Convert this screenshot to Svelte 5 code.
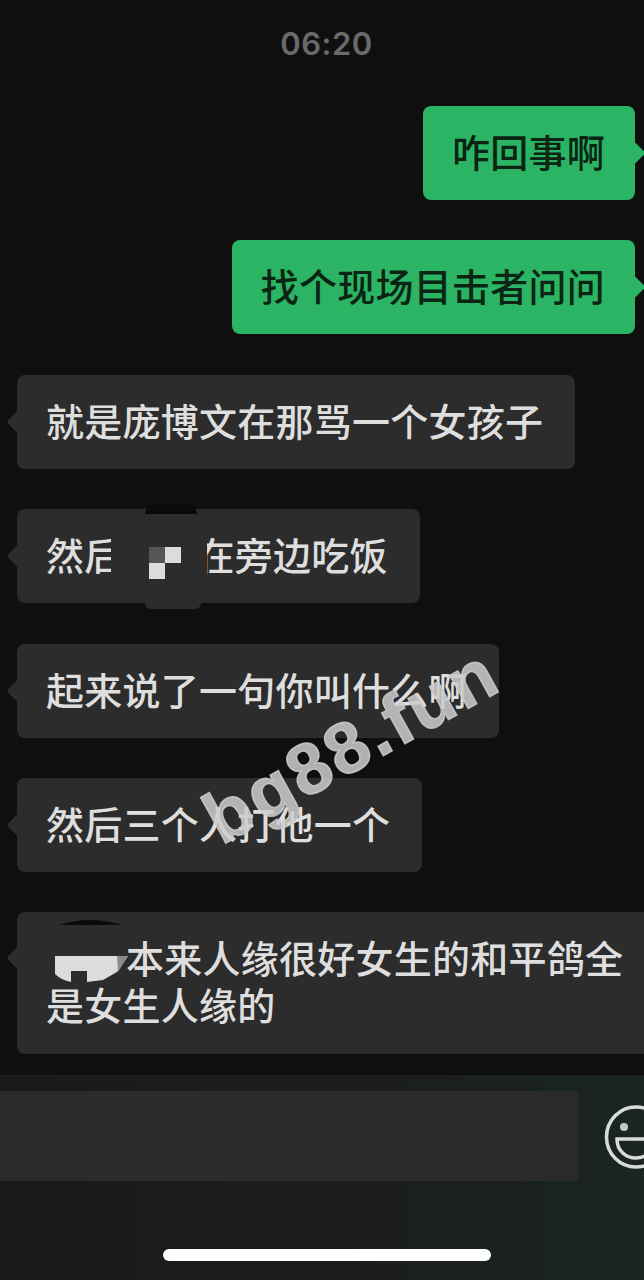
<script>
  const outgoing = ["咋回事啊", "找个现场目击者问问"];
</script>

<main>
  <div class="time">06:20</div>

  <section class="messages">
    {#each outgoing as text}
      <div class="bubble me">{text}</div>
    {/each}

    <div class="bubble">就是庞博文在那骂一个女孩子</div>

    <div class="bubble">
      然后<span class="gap two"></span>在旁边吃饭
      <span class="patch">
        <span class="bump-top"></span>
        <span class="bump-bottom"></span>
        <span class="mosaic"><i class="grey"></i><i></i><i></i><i class="none"></i></span>
      </span>
    </div>

    <div class="bubble">起来说了一句你叫什么啊</div>
    <div class="bubble">然后三个人打他一个</div>

    <div class="bubble wide">
      <span class="gap name"></span>本来人缘很好女生的和平鸽全<br />是女生人缘的
      <svg class="smudge" width="90" height="76" viewBox="0 0 90 76">
        <path d="M14 13 Q44 3 77 13 Z" fill="#0b0b0b" />
        <path d="M10 44 L83 44 L72 60 L58 68 L42 70 L42 59 L26 59 L26 70 Q16 68 10 62 Z" fill="#dcdcdc" />
        <path d="M72 44 L83 44 L73 60 Z" fill="#8c8c8c" />
      </svg>
    </div>
  </section>

  <footer>
    <div class="input-row">
      <div class="input"></div>
      <svg class="emoji" width="64" height="66" viewBox="0 0 64 66" fill="none">
        <ellipse cx="32" cy="33" rx="29.5" ry="30" stroke="#d8dcd8" stroke-width="3.5" />
        <circle cx="20" cy="23" r="4" fill="#c4c8c4" />
        <circle cx="44" cy="23" r="4" fill="#c4c8c4" />
        <path d="M13 35 H51 C51 47 42 54 32 54 C22 54 13 47 13 35 Z" stroke="#d8dcd8" stroke-width="3.5" />
      </svg>
    </div>
    <div class="home-bar"></div>
  </footer>

  <div class="watermark">bg88.fun</div>
</main>

<style>
  :global(body) {
    background: #0f0f10;
  }

  main {
    position: relative;
    width: 644px;
    height: 1280px;
    overflow: hidden;
    display: flex;
    flex-direction: column;
    font-family: "Noto Sans CJK SC", "Noto Sans", sans-serif;
  }

  .time {
    padding: 25px 0 0 9px;
    height: 37px;
    line-height: 37px;
    text-align: center;
    font-family: Inter, "Liberation Sans", sans-serif;
    font-size: 31px;
    font-weight: 600;
    letter-spacing: 0.5px;
    color: #6a6a6a;
  }

  .messages {
    margin-top: 44px;
    display: flex;
    flex-direction: column;
    align-items: flex-start;
    gap: 40.4px;
    padding: 0 9px 0 17px;
    height: 969px;
  }

  .bubble {
    position: relative;
    flex-shrink: 0;
    padding: 21px 32px 26px 29px;
    line-height: 47px;
    font-size: 38px;
    font-weight: 500;
    letter-spacing: 0.25px;
    color: #dedede;
    background: #2c2c2c;
    border-radius: 8px;
    white-space: nowrap;
  }

  .bubble::before {
    content: "";
    position: absolute;
    left: -7px;
    top: 50%;
    width: 18px;
    height: 18px;
    margin-top: -9px;
    background: inherit;
    border-radius: 3px;
    transform: rotate(45deg);
  }

  .me {
    align-self: flex-end;
    padding-left: 29px;
    padding-right: 30px;
    color: #0b2413;
    background: #2ab463;
  }

  .me::before {
    left: auto;
    right: -7px;
  }

  .wide {
    width: 640px;
    box-sizing: border-box;
    padding-right: 0;
    padding-bottom: 27px;
  }

  .wide::before {
    top: 46px;
  }

  .gap {
    display: inline-block;
  }

  .gap.two {
    width: 74px;
  }

  .gap.name {
    width: 80px;
  }

  .patch {
    position: absolute;
    left: 94px;
    top: 18px;
    width: 96px;
    height: 58px;
    background: #2c2c2c;
  }

  .bump-top {
    position: absolute;
    left: 34px;
    top: -22px;
    width: 52px;
    height: 9px;
    background: #0a0a0a;
    border-radius: 10px 10px 0 0;
  }

  .bump-bottom {
    position: absolute;
    left: 34px;
    top: 76px;
    width: 56px;
    height: 6px;
    background: #2c2c2c;
    border-radius: 0 0 10px 10px;
  }

  .mosaic {
    position: absolute;
    left: 38px;
    top: 20px;
    display: grid;
    grid-template-columns: 16px 16px;
    grid-auto-rows: 16px;
  }

  .mosaic i {
    background: #dcdcdc;
  }

  .mosaic i.grey {
    background: #555;
  }

  .mosaic i.none {
    background: none;
  }

  .smudge {
    position: absolute;
    left: 28px;
    top: 0;
  }

  footer {
    flex: 1;
    background: linear-gradient(90deg, #1a1a1a 0%, #1b1c1b 50%, #1b2620 100%);
    border-top: 1px solid #1c1c1c;
  }

  .input-row {
    display: flex;
    align-items: flex-start;
    gap: 25px;
    padding-top: 15px;
  }

  .input {
    flex-shrink: 0;
    width: 579px;
    height: 90px;
    background: #2a2b2a;
    border-radius: 0 6px 6px 0;
  }

  .emoji {
    flex-shrink: 0;
    margin-top: 13px;
  }

  .home-bar {
    width: 328px;
    height: 12px;
    margin: 68px 0 0 163px;
    background: #fff;
    border-radius: 6px;
  }

  .watermark {
    position: absolute;
    left: 189px;
    top: 710px;
    font-family: "Liberation Sans", sans-serif;
    font-size: 72px;
    font-weight: 700;
    line-height: 70px;
    letter-spacing: 3px;
    -webkit-text-stroke: 1.5px rgba(205, 205, 205, 0.85);
    color: rgba(205, 205, 205, 0.85);
    transform: rotate(-29deg);
  }
</style>
